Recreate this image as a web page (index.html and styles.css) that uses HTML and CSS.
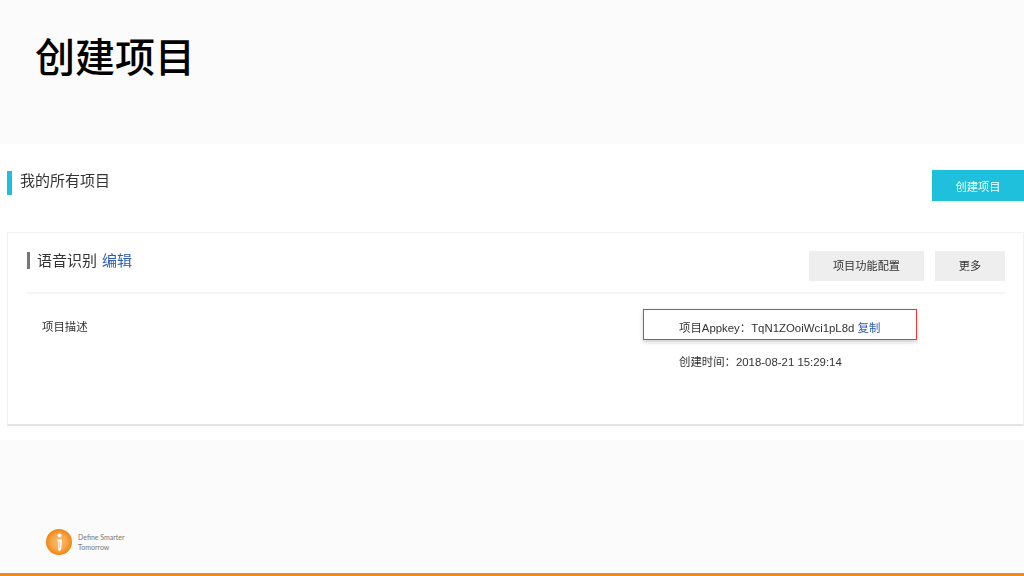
FILE: index.html
```html
<!DOCTYPE html>
<html lang="zh">
<head>
<meta charset="utf-8">
<title>创建项目</title>
<link rel="stylesheet" href="styles.css">
</head>
<body>
<div class="slide">
  <header class="slide-head"><h1 class="slide-title">创建项目</h1></header>
  <main class="panel">
    <div class="panel-head">
      <h2 class="panel-title">我的所有项目</h2>
      <button class="btn-create">创建项目</button>
    </div>
    <section class="card">
      <div class="card-head">
        <h3 class="card-title">语音识别<a class="link">编辑</a></h3>
        <div class="card-actions">
          <button class="btn btn-config">项目功能配置</button>
          <button class="btn btn-more">更多</button>
        </div>
      </div>
      <div class="card-body">
        <div class="desc">项目描述</div>
        <div class="meta">
          <div class="meta-row highlight-anchor">项目Appkey：TqN1ZOoiWci1pL8d <a class="link">复制</a><span class="highlight"></span></div>
          <div class="meta-row">创建时间：2018-08-21 15:29:14</div>
        </div>
      </div>
    </section>
  </main>
  <footer class="slide-foot">
    <svg class="logo" width="28" height="28" viewBox="0 0 28 28" aria-hidden="true">
      <defs>
        <radialGradient id="lg" cx="50%" cy="50%" r="50%">
          <stop offset="0" stop-color="#fbbd78"/>
          <stop offset="0.6" stop-color="#f8a548"/>
          <stop offset="1" stop-color="#ef8510"/>
        </radialGradient>
      </defs>
      <circle cx="14" cy="14" r="13" fill="url(#lg)"/>
      <circle cx="14.500" cy="7.500" r="2" fill="#fff"/>
      <path d="M12 11.500h5l-.8 9c-.1 1.400-1 2.300-2.200 2.800-.5-1-.9-1.600-.8-3l.3-6.600c-.7-.3-1.300-1-1.500-2.200z" fill="#fff"/>
      <path d="M14.800 13.500l-.3 6.500" stroke="#fbc88e" stroke-width="1" fill="none"/>
    </svg>
    <div class="tagline">Define Smarter<br>Tomorrow</div>
  </footer>
  <div class="bottom-bar"></div>
</div>
</body>
</html>
```
FILE: styles.css
```css
* { box-sizing: border-box; }
html, body { margin: 0; padding: 0; }
body {
  width: 1024px;
  height: 576px;
  overflow: hidden;
  background: #fbfbfb;
  font-family: "Liberation Sans", "Noto Sans CJK SC", sans-serif;
  color: #333;
}
.slide { width: 1024px; height: 576px; display: flex; flex-direction: column; }
.slide-head { height: 144px; padding: 26px 0 0 35px; }
.slide-title {
  margin: 0;
  font-family: "Noto Sans CJK SC", sans-serif;
  font-size: 40px;
  line-height: 58px;
  font-weight: 500;
  color: #000;
}
.panel { height: 296px; background: #fff; padding: 26px 0 0 7px; filter: blur(0.35px); }
.panel-head { display: flex; justify-content: space-between; align-items: flex-start; height: 62px; }
.panel-title {
  margin: 1px 0 0;
  padding-left: 8px;
  border-left: 5px solid #1fc0dc;
  height: 24px;
  font-size: 15px;
  line-height: 20px;
  font-weight: 400;
  color: #333;
}
.btn-create {
  width: 92px;
  height: 31px;
  border: 0;
  padding: 0;
  background: #1fc0dc;
  color: #fff;
  font: inherit;
  font-size: 11.250px;
}
.card {
  height: 194px;
  border: 1px solid #f1f1f1;
  border-bottom: 2px solid #e4e4e4;
  padding: 18px 18px 0 19px;
  background: #fff;
}
.card-head {
  display: flex;
  justify-content: space-between;
  align-items: flex-start;
  height: 43px;
  border-bottom: 2px solid #f5f5f5;
}
.card-title {
  margin: 1px 0 0;
  padding-left: 7px;
  border-left: 3px solid #777;
  height: 17px;
  font-size: 15px;
  line-height: 17px;
  font-weight: 400;
  color: #333;
}
.link { color: #2a5db0; }
.card-title .link { margin-left: 5px; }
.card-actions { display: flex; gap: 11px; }
.btn {
  height: 30px;
  border: 0;
  padding: 0 0 2px;
  background: #eeeeee;
  color: #333;
  font: inherit;
  font-size: 11.200px;
}
.btn-config { width: 115px; }
.btn-more { width: 70px; }
.card-body { display: flex; padding-top: 26px; font-size: 11.400px; color: #333; }
.desc { width: 652px; padding-left: 15px; line-height: 16px; margin-top: -1px; }
.meta { display: flex; flex-direction: column; gap: 18px; }
.meta-row { line-height: 16px; white-space: nowrap; }
.highlight-anchor { position: relative; }
.highlight {
  position: absolute;
  left: -36px;
  top: -11px;
  width: 274px;
  height: 31px;
  border: 1px solid #e8383d;
  box-shadow: 0 2px 4px rgba(0, 0, 0, 0.2);
}
.slide-foot { height: 133px; display: flex; align-items: flex-start; padding: 88px 0 0 45px; gap: 5px; }
.logo { display: block; flex: none; }
.tagline { font-family: Lato, sans-serif; font-size: 7px; line-height: 10px; color: #777; padding-top: 4px; }
.bottom-bar { height: 3px; background: #f08a1d; }
```
